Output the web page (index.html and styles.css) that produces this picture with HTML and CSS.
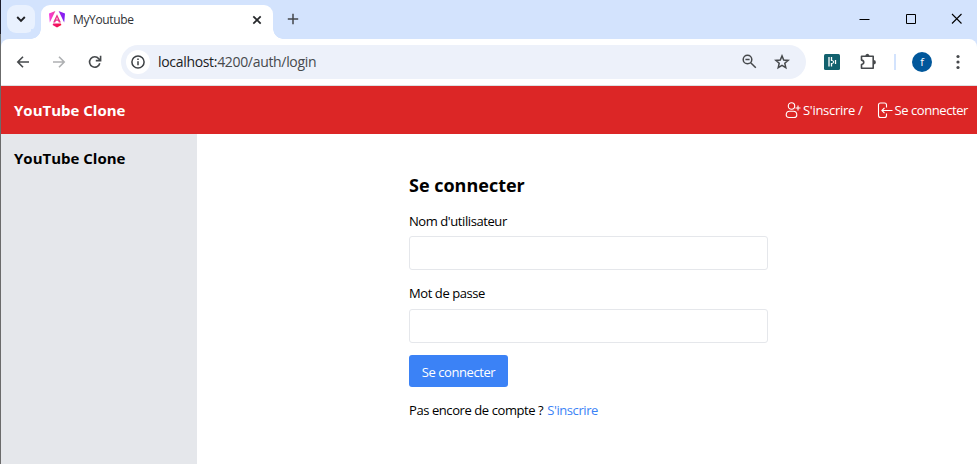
FILE: index.html
```html
<!DOCTYPE html>
<html lang="fr">
<head>
<meta charset="utf-8">
<title>MyYoutube</title>
<link rel="stylesheet" href="styles.css">
</head>
<body>
<div class="window">
  <div class="edge"></div>
  <div class="browser">
    <div class="tabstrip">
      <button class="tab-search" aria-label="Onglets"><svg width="10" height="8" viewBox="0 0 10 8"><path d="M1.2 2l3.8 3.8L8.8 2" fill="none" stroke="#202124" stroke-width="1.9"/></svg></button>
      <div class="tab">
        <svg class="favicon" width="16" height="17" viewBox="0 0 16 17">
          <defs><linearGradient id="ng" gradientUnits="userSpaceOnUse" x1="0" x2="16" y1="0" y2="0"><stop offset="0" stop-color="#f637e3"/><stop offset=".35" stop-color="#f0409f"/><stop offset=".6" stop-color="#a020e8"/><stop offset="1" stop-color="#7b1cf5"/></linearGradient><linearGradient id="nb" x1="0" x2="1"><stop offset="0" stop-color="#f0147c"/><stop offset="1" stop-color="#f4103c"/></linearGradient></defs>
          <path d="M0 2.4L6.4 0 .8 11.5zM16 2.4L9.6 0l5.6 11.5z" fill="url(#ng)"/>
          <path d="M8 3.2l3.9 8.3H9.8L9.1 9.8H6.9l-.7 1.7H4.1zM8 6.2L7.2 8.5h1.6z" fill="#e9348e"/>
          <path d="M4.2 12.5h7.6l.6 1.4L8 16.4l-4.4-2.5z" fill="url(#nb)"/>
        </svg>
        <span class="tab-title">MyYoutube</span>
        <svg class="tab-close" width="10" height="10" viewBox="0 0 10 10"><path d="M1.3 1.3l7.4 7.4M8.7 1.3L1.3 8.7" stroke="#26282b" stroke-width="1.7"/></svg>
      </div>
      <svg class="new-tab" width="12" height="12" viewBox="0 0 12 12"><path d="M6 .8v10.400M.8 6h10.400" stroke="#44474b" stroke-width="1.5"/></svg>
      <div class="window-buttons">
        <svg width="11" height="11" viewBox="0 0 11 11"><path d="M.5 6.5h10" stroke="#000"/></svg>
        <svg width="11" height="11" viewBox="0 0 11 11"><path d="M1.5 1.5h9v9h-9z" fill="none" stroke="#000"/></svg>
        <svg width="11" height="11" viewBox="0 0 11 11"><path d="M1 1l9.500 9.500M10.500 1L1 10.500" stroke="#000" stroke-width="1.1"/></svg>
      </div>
    </div>
    <div class="toolbar">
      <div class="nav">
        <svg width="14" height="14" viewBox="0 0 14 14"><path d="M13 7H2M7 1.700L1.800 7 7 12.300" fill="none" stroke="#46494c" stroke-width="1.6"/></svg>
        <svg width="14" height="14" viewBox="0 0 14 14"><path d="M1 7h11M7 1.700L12.200 7 7 12.300" fill="none" stroke="#aeb0b2" stroke-width="1.6"/></svg>
        <svg width="14" height="14" viewBox="0 0 14 14"><path d="M11.800 8.200A5.200 5.200 0 1 1 10.800 3.700L12.300 5.200M12.600.8v4.800H7.800" fill="none" stroke="#46494c" stroke-width="1.6"/></svg>
      </div>
      <div class="omnibox">
        <span class="info"><svg width="14" height="14" viewBox="0 0 14 14"><circle cx="7" cy="7" r="6.1" fill="none" stroke="#3c4043" stroke-width="1.5"/><path d="M7 6.200v4M7 3.600v1.500" stroke="#3c4043" stroke-width="1.5"/></svg></span>
        <span class="url"><span class="host">localhost:</span>4200/auth/login</span>
        <svg class="zoom-icon" width="15" height="15" viewBox="0 0 15 15"><circle cx="5.5" cy="5.5" r="4.3" fill="none" stroke="#46494c" stroke-width="1.5"/><path d="M3.400 5.500h4.200M8.700 8.700l5.100 5.100" stroke="#46494c" stroke-width="1.5"/></svg>
        <svg class="star" width="16" height="16" viewBox="0 0 16 16"><path d="M8 1.900l1.700 4.100 4.500.4-3.400 2.900 1 4.400L8 11.400l-3.800 2.300 1-4.400-3.400-2.900 4.500-.4z" fill="none" stroke="#46494c" stroke-width="1.5"/></svg>
      </div>
      <div class="extensions">
        <svg class="ext" width="16" height="16" viewBox="0 0 16 16"><rect width="16" height="16" rx="1.5" fill="#12616e"/><path d="M5 3v9.500M7.500 3v4M7.500 9v3.500M11.500 6v4" stroke="#fff" stroke-width="1.3"/><path d="M7.500 6.500l2 .5v2l-2 .5" fill="none" stroke="#fff" stroke-width=".9"/></svg>
        <svg class="puzzle" width="17" height="17" viewBox="0 0 17 17"><path d="M1.500 3.300h11.700v11.900H1.500v-3.700c3-.5 3-3.900 0-4.400z" fill="none" stroke="#46494c" stroke-width="1.6" stroke-linejoin="round"/><path d="M5.300 3.200a2.100 2.500 0 0 1 4.200 0zM13.400 7a2.400 2.100 0 0 1 0 4.400z" fill="#46494c"/></svg>
        <span class="divider"></span>
        <span class="avatar">f</span>
        <svg class="menu" width="4" height="16" viewBox="0 0 4 16"><g fill="#46494c"><circle cx="2" cy="2.5" r="1.6"/><circle cx="2" cy="8" r="1.6"/><circle cx="2" cy="13.5" r="1.6"/></g></svg>
      </div>
    </div>
    <header class="app-header">
      <span class="brand">YouTube Clone</span>
      <nav class="account">
        <a class="account-link signup"><svg width="17" height="17" viewBox="0 0 17 17"><g fill="none" stroke="#fff" stroke-width="1.1"><circle cx="6.500" cy="4" r="3.200"/><path d="M4.700 9.200h3.600c2 0 3.500 1.500 3.500 3.700 0 1.700-1.300 2.600-2.800 2.600H4c-1.500 0-2.800-.9-2.800-2.600 0-2.200 1.500-3.700 3.500-3.700zM13 3.500v5M10.500 6h5"/></g></svg><span>S'inscrire /</span></a>
        <a class="account-link"><svg width="16" height="17" viewBox="0 0 16 17"><path d="M9.500 5.400V3Q9.500 1 7.500 1H3.500Q1.500 1 1.500 3v10.500q0 2 2 2h4q2 0 2-2v-2M15.500 8.500H5M7.500 5.900L4.900 8.500l2.600 2.600" fill="none" stroke="#fff" stroke-width="1.1"/></svg><span>Se connecter</span></a>
      </nav>
    </header>
    <div class="app-body">
      <aside class="sidebar"><span class="brand">YouTube Clone</span></aside>
      <main class="content">
        <form class="login">
          <h1>Se connecter</h1>
          <label for="user">Nom d'utilisateur</label>
          <input id="user" type="text">
          <label for="pass">Mot de passe</label>
          <input id="pass" class="password" type="password">
          <button class="submit" type="button">Se connecter</button>
          <p><span>Pas encore de compte ?</span><a class="register">S'inscrire</a></p>
        </form>
      </main>
    </div>
  </div>
</div>
</body>
</html>
```
FILE: styles.css
```css
* { box-sizing: border-box; }
body { margin: 0; overflow: hidden; background: #fff; color: #000; font: 13px "Open Sans", "Noto Sans", sans-serif; letter-spacing: -.42px; white-space: nowrap; }
svg { display: block; flex: none; }
button { border: 0; padding: 0; font: inherit; letter-spacing: inherit; }
.window { display: flex; width: 977px; height: 464px; }
.edge { width: 1px; background: linear-gradient(#1c1d2b 34px, #6b6b6b 34px); }
.browser { flex: 1; display: flex; flex-direction: column; background: #d3e3fd; }

.tabstrip { display: flex; height: 39px; padding-left: 6px; }
.tab-search { display: flex; align-items: center; justify-content: center; width: 28px; height: 28px; margin-top: 5px; border-radius: 9px; background: #e9f1fe; }
.tab { position: relative; display: flex; align-items: center; width: 232px; height: 34px; margin: 5px 0 0 6px; padding: 0 11px 5px 8px; border-radius: 9px 9px 0 0; background: #fff; }
.tab::before, .tab::after { content: ""; position: absolute; bottom: 0; width: 10px; height: 10px; }
.tab::before { left: -10px; background: radial-gradient(circle at 0 0, #d3e3fd 9.5px, #fff 10px); }
.tab::after { right: -10px; background: radial-gradient(circle at 100% 0, #d3e3fd 9.5px, #fff 10px); }
.tab-title { flex: 1; margin-left: 8px; color: #303236; font-size: 12px; letter-spacing: -.35px; }
.new-tab { margin: 13px 0 0 14px; }
.window-buttons { display: flex; gap: 35px; margin: 13px 15px 0 auto; }

.toolbar { display: flex; align-items: center; height: 47px; padding: 0 17px 1px 15px; border-bottom: 1px solid #dedfe1; border-radius: 8px 8px 0 0; background: #fff; }
.nav { display: flex; gap: 22px; width: 105px; }
.omnibox { display: flex; align-items: center; width: 685px; height: 34px; padding: 0 16px 0 5px; border-radius: 17px; background: #edf1fa; }
.info { display: flex; align-items: center; justify-content: center; width: 24px; height: 24px; border-radius: 50%; background: #fff; }
.url { margin-left: 8px; color: #46494d; font-size: 14px; letter-spacing: -.32px; }
.host { color: #202124; }
.zoom-icon { margin-left: auto; }
.star { margin-left: 17px; }
.extensions { display: flex; align-items: center; flex: 1; padding-left: 18px; }
.puzzle { margin-left: 20px; }
.divider { width: 2px; height: 16px; margin-left: 17px; background: #d3e3fd; }
.avatar { display: flex; align-items: center; justify-content: center; width: 20px; height: 20px; margin-left: 16px; border-radius: 50%; background: #01579b; color: #fff; font-size: 11px; }
.menu { margin-left: auto; }

.app-header { display: flex; align-items: center; justify-content: space-between; height: 48px; padding: 0 9px 0 13px; background: #dc2626; color: #fff; }
.brand { font-size: 15px; font-weight: 700; line-height: 24px; letter-spacing: 0; }
.account { display: flex; gap: 15px; }
.account-link { display: flex; align-items: center; gap: 1px; }
.signup { letter-spacing: -.3px; }
.app-body { flex: 1; display: flex; background: #fff; }
.sidebar { width: 196px; padding: 12px 13px; background: #e5e7eb; }
.content { flex: 1; display: flex; justify-content: center; padding-top: 36px; }
.login { display: flex; flex-direction: column; align-items: flex-start; width: 359px; margin-left: 3px; }
h1 { margin: 0; font-size: 18px; line-height: 30px; letter-spacing: 0; }
label { height: 21px; line-height: 21px; margin-top: 11px; }
input { width: 359px; height: 34px; margin: 4px 0 2px; padding: 0 10px; border: 1px solid #e5e7eb; border-radius: 3px; background: #fff; }
.password { margin-top: 5px; }
.submit { width: 99px; height: 32px; margin-top: 10px; border-radius: 3px; background: #3b82f6; color: #fff; line-height: 34px; }
.login p { display: flex; gap: 4px; margin: 13px 0 0; line-height: 21px; }
.register { color: #3b82f6; }
```
